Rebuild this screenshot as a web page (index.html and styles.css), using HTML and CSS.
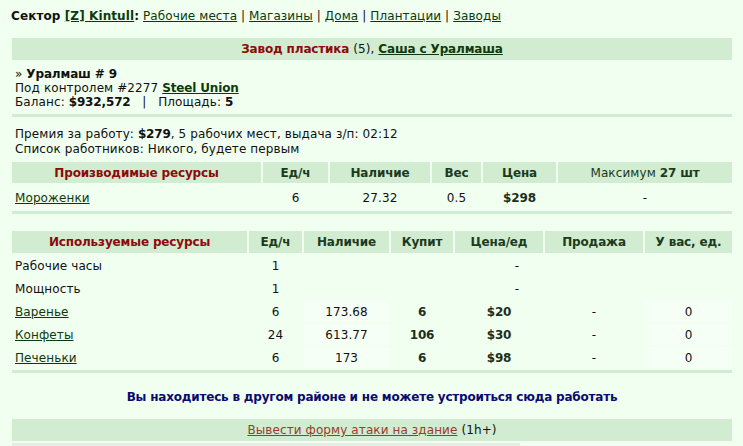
FILE: index.html
```html
<!DOCTYPE html>
<html lang="ru">
<head>
<meta charset="utf-8">
<title>Завод пластика</title>
<link rel="stylesheet" href="styles.css">
</head>
<body>
<div class="nav"><b>Сектор <a href="#">[Z] Kintull</a>:</b> <a href="#">Рабочие места</a> | <a href="#">Магазины</a> | <a href="#">Дома</a> | <a href="#">Плантации</a> | <a href="#">Заводы</a></div>

<div class="page">
  <div class="bar title"><span class="red">Завод пластика</span> (5), <a href="#" class="strong">Саша с Уралмаша</a></div>

  <div class="info">
    <div>» <b>Уралмаш # 9</b></div>
    <div>Под контролем #2277 <a href="#" class="strong">Steel Union</a></div>
    <div>Баланс: <b>$932,572</b> &nbsp; | &nbsp; Площадь: <b>5</b></div>
  </div>
  <div class="rule"></div>
  <div class="info work">
    <div>Премия за работу: <b>$279</b>, 5 рабочих мест, выдача з/п: 02:12</div>
    <div>Список работников: Никого, будете первым</div>
  </div>

  <table class="res res1">
    <colgroup><col class="c1"><col class="c2"><col class="c3"><col class="c4"><col class="c5"><col class="c6"></colgroup>
    <tr class="head">
      <th class="red">Производимые ресурсы</th><th>Ед/ч</th><th>Наличие</th><th>Вес</th><th>Цена</th><th class="norm">Максимум <b>27 шт</b></th>
    </tr>
    <tr class="row1">
      <td class="name"><a href="#">Мороженки</a></td><td>6</td><td>27.32</td><td>0.5</td><td><b>$298</b></td><td>-</td>
    </tr>
    <tr class="foot"><td colspan="6"></td></tr>
  </table>

  <table class="res res2">
    <colgroup><col class="d1"><col class="d2"><col class="d3"><col class="d4"><col class="d5"><col class="d6"><col class="d7"></colgroup>
    <tr class="head">
      <th class="red">Используемые ресурсы</th><th>Ед/ч</th><th>Наличие</th><th>Купит</th><th>Цена/ед</th><th>Продажа</th><th>У вас, ед.</th>
    </tr>
    <tr>
      <td class="name">Рабочие часы</td><td>1</td><td></td><td colspan="3">-</td><td></td>
    </tr>
    <tr>
      <td class="name">Мощность</td><td>1</td><td></td><td colspan="3">-</td><td></td>
    </tr>
    <tr>
      <td class="name"><a href="#">Варенье</a></td><td>6</td><td class="lt">173.68</td><td><b>6</b></td><td><b>$20</b></td><td>-</td><td class="lt">0</td>
    </tr>
    <tr>
      <td class="name"><a href="#">Конфеты</a></td><td>24</td><td class="lt">613.77</td><td><b>106</b></td><td><b>$30</b></td><td>-</td><td class="lt">0</td>
    </tr>
    <tr>
      <td class="name"><a href="#">Печеньки</a></td><td>6</td><td class="lt">173</td><td><b>6</b></td><td><b>$98</b></td><td>-</td><td class="lt">0</td>
    </tr>
    <tr class="foot"><td colspan="7"></td></tr>
  </table>

  <div class="msg">Вы находитесь в другом районе и не можете устроиться сюда работать</div>

  <div class="bar attack"><a href="#" class="atk">Вывести форму атаки на здание</a> (1h+)</div>
  <div class="next"><div class="next-bar"></div></div>
</div>
</body>
</html>
```

FILE: styles.css
```css
html, body {
  margin: 0;
  padding: 0;
  background: #f0fff0;
}
body {
  font-family: "DejaVu Sans", Verdana, sans-serif;
  font-size: 12px;
  line-height: 14px;
  letter-spacing: 0.1px;
  color: #111;
}
b, .red, a.strong, .res th {
  letter-spacing: -0.15px;
}
a {
  color: #0c3a0c;
  text-decoration: underline;
}
a.strong {
  font-weight: bold;
}
.red {
  color: #8b0a0a;
  font-weight: bold;
}
.nav {
  padding: 9px 0 0 11px;
  height: 20px;
}
.nav b {
  letter-spacing: 0.1px;
}
.page {
  width: 720px;
  margin-left: 12px;
}
.bar {
  background: #d1ecd1;
  height: 22px;
  line-height: 22px;
  text-align: center;
}
.title {
  margin-top: 9px;
}
.info {
  padding: 7px 3px 0 3px;
  height: 43px;
}
.rule {
  height: 3px;
  background: #d1ecd1;
  margin-top: 4px;
}
.info.work {
  padding-top: 10px;
  height: 33px;
}
.work div + div {
  margin-top: 1px;
}
table.res {
  width: 724px;
  margin-left: -2px;
  border-collapse: separate;
  border-spacing: 2px;
  table-layout: fixed;
}
.res th, .res td {
  padding: 0;
  text-align: center;
  white-space: nowrap;
}
.res th {
  background: #d1ecd1;
  color: #1c3a1c;
  font-weight: bold;
}
.res th.norm {
  font-weight: normal;
  letter-spacing: 0.1px;
}
.res th.red {
  color: #8b0a0a;
}
.res td.name {
  text-align: left;
  padding-left: 3px;
}
.res td b {
  color: #1c2f1c;
}
.res td.lt {
  background: #f6fff6;
}
.res .foot td {
  height: 3px;
  background: #d1ecd1;
}
.res1 .head th { height: 21px; }
.res1 .row1 td { height: 23px; padding-top: 1px; }
.res1 col.c1 { width: 249px; }
.res1 col.c2 { width: 65px; }
.res1 col.c3 { width: 100px; }
.res1 col.c4 { width: 49px; }
.res1 col.c5 { width: 73px; }
.res1 col.c6 { width: auto; }

.res2 {
  margin-top: 13px;
}
.res2 .head th { height: 22px; }
.res2 td { height: 21px; }
.res2 col.d1 { width: 235px; }
.res2 col.d2 { width: 53px; }
.res2 col.d3 { width: 85px; }
.res2 col.d4 { width: 62px; }
.res2 col.d5 { width: 88px; }
.res2 col.d6 { width: 98px; }
.res2 col.d7 { width: auto; }

.msg {
  text-align: center;
  font-weight: bold;
  letter-spacing: -0.2px;
  color: #0a0a6e;
  margin-top: 15px;
  height: 27px;
}
.attack {
  margin-top: 2px;
}
a.atk {
  color: #9a3a2a;
}
.next {
  margin-top: 2px;
  height: 20px;
}
.next-bar {
  width: 508px;
  height: 20px;
  background: #e4eee4;
}
```
